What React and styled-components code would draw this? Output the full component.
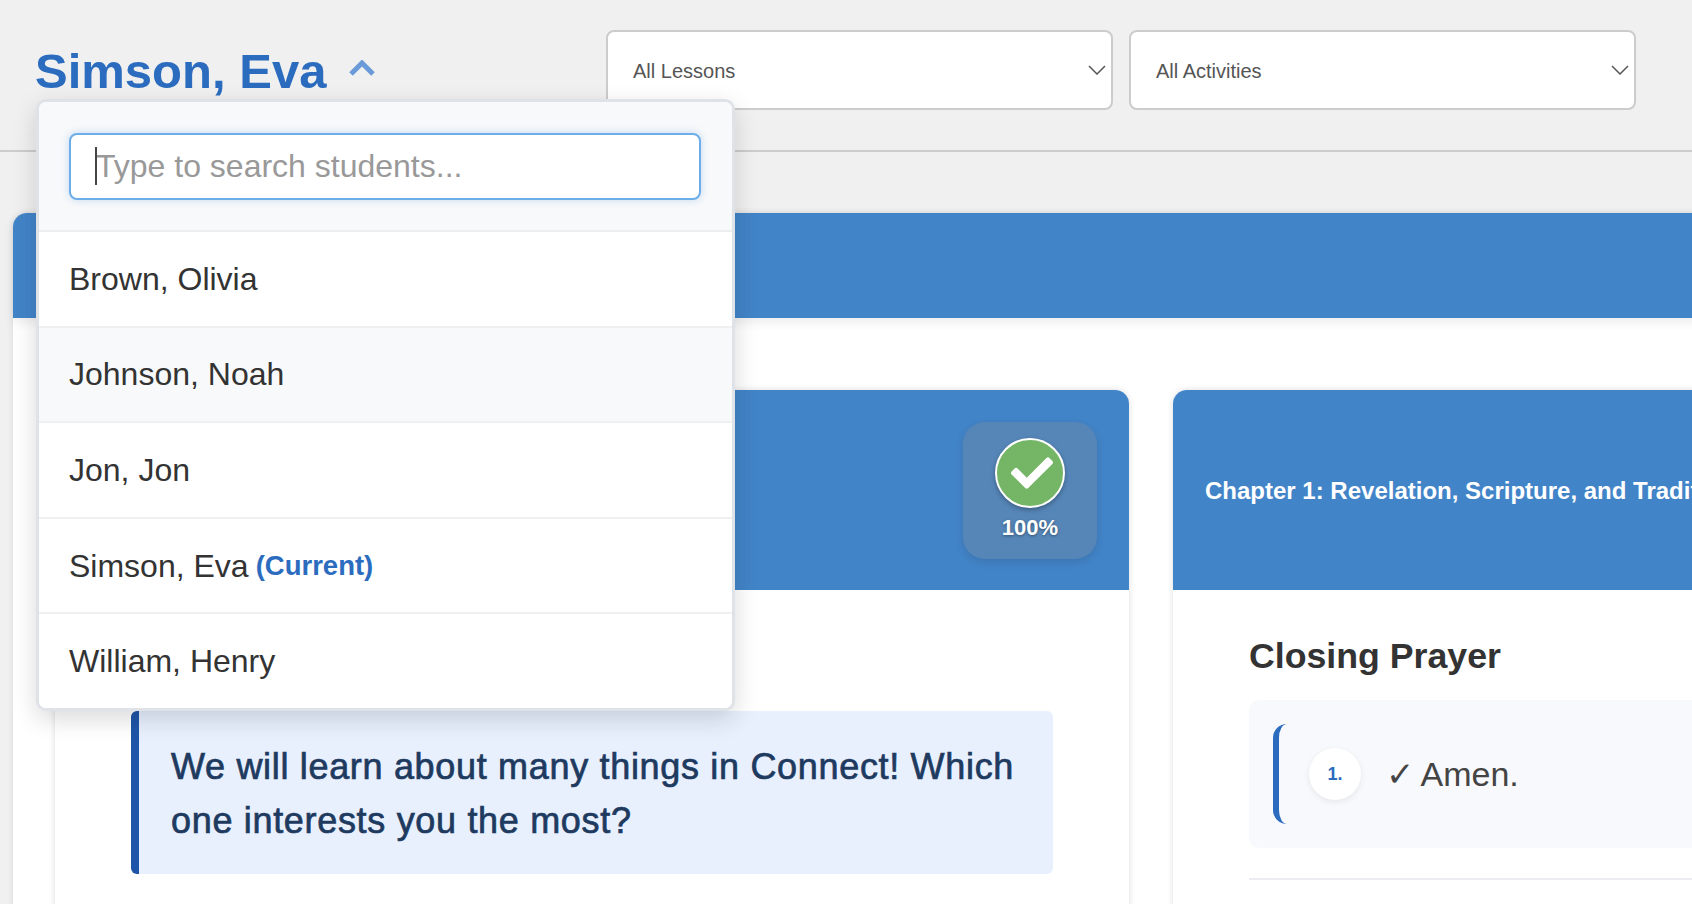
import React from 'react'
import styled, { createGlobalStyle } from 'styled-components'
import { FaCheck } from 'react-icons/fa'

const GlobalStyle = createGlobalStyle`
  html, body {
    margin: 0;
    height: 100%;
    overflow: hidden;
    background: #f0f0f0;
    font-family: "Liberation Sans", Arial, sans-serif;
    color: #333;
  }
  * { box-sizing: border-box; }
`

const Page = styled.div`
  width: 1692px;
  height: 904px;
  overflow: hidden;
`

const Header = styled.header`
  position: relative;
  display: flex;
  align-items: flex-start;
  height: 152px;
  padding: 30px 0 0 35px;
  border-bottom: 2px solid #ccc;
`

const StudentButton = styled.button`
  display: flex;
  align-items: center;
  gap: 23px;
  width: 571px;
  height: 82px;
  padding: 0;
  border: 0;
  background: none;
  color: #2b6cbf;
  font: bold 49px "Liberation Sans", Arial, sans-serif;
  line-height: 82px;
  cursor: pointer;

  svg { margin-top: -6px; }
`

const Filters = styled.div`
  display: flex;
  gap: 16px;
`

const SelectWrap = styled.div`
  position: relative;
  width: 507px;
  height: 80px;

  svg {
    position: absolute;
    top: 35px;
    right: 7px;
  }
`

const Select = styled.select`
  appearance: none;
  width: 100%;
  height: 100%;
  padding: 2px 25px 0;
  border: 2px solid #ccc;
  border-radius: 8px;
  background: #fff;
  color: #555;
  font: 20px "Liberation Sans", Arial, sans-serif;
`

const Dropdown = styled.div`
  position: absolute;
  z-index: 10;
  top: 99px;
  left: 36px;
  width: 699px;
  height: 612px;
  overflow: hidden;
  border: 3px solid #dfe3e8;
  border-radius: 10px;
  background: #fff;
  box-shadow: 0 8px 25px rgba(0, 0, 0, 0.15);
`

const SearchArea = styled.div`
  position: relative;
  height: 130px;
  padding: 31px 31px 0 30px;
  border-bottom: 2px solid #eee;
  background: #f8f9fa;
`

const SearchInput = styled.input`
  display: block;
  width: 100%;
  height: 67px;
  padding: 0 25px;
  border: 2px solid #6daee8;
  border-radius: 8px;
  outline: none;
  background: #fff;
  box-shadow: 0 0 8px rgba(74, 144, 226, 0.3);
  font: 32px "Liberation Sans", Arial, sans-serif;
  caret-color: transparent;

  &::placeholder { color: #999; opacity: 1; }
`

const Caret = styled.span`
  position: absolute;
  top: 45px;
  left: 56px;
  width: 2px;
  height: 38px;
  background: #444;
`

const StudentRow = styled.div`
  display: flex;
  align-items: center;
  gap: 7px;
  height: ${p => (p.$last ? '94px' : '95.6px')};
  padding: 1px 30px 0;
  border-bottom: ${p => (p.$last ? '0' : '2px solid #f0f0f0')};
  background: ${p => (p.$hover ? '#f8f9fa' : '#fff')};
  color: #333;
  font-size: 32px;
`

const CurrentTag = styled.span`
  color: #2b6cbf;
  font-size: 27.5px;
  font-weight: bold;
`

const Content = styled.main`
  width: 1800px;
  height: 900px;
  margin: 61px 0 0 13px;
  border-radius: 14px 14px 0 0;
  background: #fff;
  box-shadow: 0 0 6px rgba(0, 0, 0, 0.1);
`

const Banner = styled.div`
  height: 105px;
  border-radius: 14px 14px 0 0;
  background: #4284c8;
  box-shadow: 0 4px 12px rgba(0, 0, 0, 0.08);
`

const Cards = styled.div`
  display: grid;
  grid-template-columns: 1074px 1074px;
  gap: 44px;
  padding: 72px 0 0 42px;
`

const Card = styled.section`
  height: 700px;
  overflow: hidden;
  border-radius: 14px 14px 0 0;
  background: #fff;
  box-shadow: 0 0 6px rgba(0, 0, 0, 0.14);
`

const CardHeader = styled.div`
  display: flex;
  align-items: center;
  justify-content: ${p => (p.$end ? 'flex-end' : 'flex-start')};
  height: 200px;
  padding: 0 32px;
  background: #4284c8;
  color: #fff;
  font-size: 24px;
  font-weight: bold;
  white-space: nowrap;
`

const ChapterTitle = styled.span`
  margin-top: 2px;
`

const ProgressBadge = styled.div`
  display: flex;
  flex-direction: column;
  align-items: center;
  width: 134px;
  height: 137px;
  padding-top: 16px;
  border-radius: 22px;
  background: rgba(140, 140, 140, 0.27);
  box-shadow: 0 3px 8px rgba(0, 0, 0, 0.12);
  font-size: 22px;
  text-shadow: 0 1px 3px rgba(0, 0, 0, 0.4);
`

const CheckCircle = styled.div`
  display: flex;
  align-items: center;
  justify-content: center;
  width: 70px;
  height: 70px;
  margin-bottom: 7px;
  border: 2px solid #fff;
  border-radius: 50%;
  background: #74b566;
  box-shadow: 0 2px 5px rgba(0, 0, 0, 0.3);

  svg { margin-left: 3px; }
`

const CardBody = styled.div`
  padding: ${p => p.$top} 76px 0;
`

const Question = styled.div`
  width: 922px;
  height: 163px;
  padding: 29px 20px 0 32px;
  border-left: 8px solid #1f55a8;
  border-radius: 6px;
  background: #e8f0fe;
  color: #1e3a5f;
  font-size: 36px;
  line-height: 54px;
  letter-spacing: 0.68px;
  -webkit-text-stroke: 0.7px #1e3a5f;
`

const SectionTitle = styled.h2`
  margin: 0 0 23px;
  color: #333;
  font-size: 35.7px;
  font-weight: bold;
  line-height: 42px;
`

const ChoiceBox = styled.div`
  height: 148px;
  padding: 24px;
  border-radius: 10px;
  background: #f8f9fc;
`

const Choice = styled.div`
  display: flex;
  align-items: center;
  gap: 25px;
  height: 100px;
  padding-left: 30px;
  border-left: 6px solid #2b6cbf;
  border-radius: 14px;
  color: #444;
  font-size: 34px;
`

const ChoiceText = styled.span`
  display: flex;
  align-items: center;
  gap: 6px;
`

const Tick = styled.span`
  font-family: "DejaVu Sans", sans-serif;
  font-size: 34px;
  line-height: 1;
`

const ChoiceNumber = styled.span`
  display: flex;
  align-items: center;
  justify-content: center;
  width: 52px;
  height: 52px;
  border-radius: 50%;
  background: #fff;
  box-shadow: 0 2px 6px rgba(0, 0, 0, 0.08);
  color: #2b6cbf;
  font-size: 18px;
  font-weight: bold;
`

const Divider = styled.hr`
  height: 2px;
  margin: 30px 0 0;
  border: 0;
  background: #ecedf2;
`

const Chevron = ({ color }) => (
  <svg width="18" height="10" viewBox="0 0 18 10" fill="none">
    <path d="M1 1 L9 9 L17 1" stroke={color} strokeWidth="1.5" />
  </svg>
)

const students = ['Brown, Olivia', 'Johnson, Noah', 'Jon, Jon', 'Simson, Eva', 'William, Henry']

export default function App() {
  return (
    <Page>
      <GlobalStyle />
      <Header>
        <StudentButton>
          Simson, Eva
          <svg width="26" height="16" viewBox="0 0 26 16" fill="none">
            <path d="M2 14 L13 3 L24 14" stroke="#6a9bd8" strokeWidth="5" />
          </svg>
        </StudentButton>
        <Filters>
          <SelectWrap>
            <Select defaultValue="lessons">
              <option value="lessons">All Lessons</option>
            </Select>
            <Chevron color="#555" />
          </SelectWrap>
          <SelectWrap>
            <Select defaultValue="activities">
              <option value="activities">All Activities</option>
            </Select>
            <Chevron color="#555" />
          </SelectWrap>
        </Filters>
        <Dropdown>
          <SearchArea>
            <SearchInput placeholder="Type to search students..." />
            <Caret />
          </SearchArea>
          {students.map((name, i) => (
            <StudentRow key={name} $hover={i === 1} $last={i === students.length - 1}>
              {name}
              {name === 'Simson, Eva' && <CurrentTag>(Current)</CurrentTag>}
            </StudentRow>
          ))}
        </Dropdown>
      </Header>
      <Content>
        <Banner />
        <Cards>
          <Card>
            <CardHeader $end>
              <ProgressBadge>
                <CheckCircle>
                  <FaCheck size={42} color="#fff" />
                </CheckCircle>
                100%
              </ProgressBadge>
            </CardHeader>
            <CardBody $top="121px">
              <Question>We will learn about many things in Connect! Which one interests you the most?</Question>
            </CardBody>
          </Card>
          <Card>
            <CardHeader>
              <ChapterTitle>Chapter 1: Revelation, Scripture, and Tradition</ChapterTitle>
            </CardHeader>
            <CardBody $top="45px">
              <SectionTitle>Closing Prayer</SectionTitle>
              <ChoiceBox>
                <Choice>
                  <ChoiceNumber>1.</ChoiceNumber>
                  <ChoiceText><Tick>✓</Tick> Amen.</ChoiceText>
                </Choice>
              </ChoiceBox>
              <Divider />
            </CardBody>
          </Card>
        </Cards>
      </Content>
    </Page>
  )
}
